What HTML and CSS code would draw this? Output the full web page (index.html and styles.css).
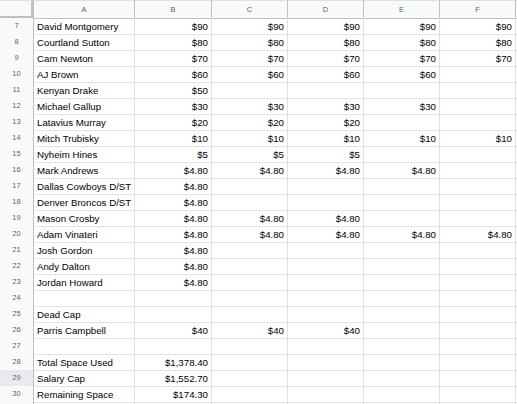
FILE: index.html
```html
<!DOCTYPE html>
<html>
<head>
<meta charset="utf-8">
<link rel="stylesheet" href="styles.css">
</head>
<body>
<div class="sheet">
  <div class="row head">
    <div class="corner"></div>
    <div class="ch">A</div><div class="ch">B</div><div class="ch">C</div><div class="ch">D</div><div class="ch">E</div><div class="ch">F</div><div class="ch"></div>
  </div>
  <div class="row"><div class="rh">7</div><div class="c">David Montgomery</div><div class="c n">$90</div><div class="c n">$90</div><div class="c n">$90</div><div class="c n">$90</div><div class="c n">$90</div><div class="c"></div></div>
  <div class="row"><div class="rh">8</div><div class="c">Courtland Sutton</div><div class="c n">$80</div><div class="c n">$80</div><div class="c n">$80</div><div class="c n">$80</div><div class="c n">$80</div><div class="c"></div></div>
  <div class="row"><div class="rh">9</div><div class="c">Cam Newton</div><div class="c n">$70</div><div class="c n">$70</div><div class="c n">$70</div><div class="c n">$70</div><div class="c n">$70</div><div class="c"></div></div>
  <div class="row"><div class="rh">10</div><div class="c">AJ Brown</div><div class="c n">$60</div><div class="c n">$60</div><div class="c n">$60</div><div class="c n">$60</div><div class="c"></div><div class="c"></div></div>
  <div class="row"><div class="rh">11</div><div class="c">Kenyan Drake</div><div class="c n">$50</div><div class="c"></div><div class="c"></div><div class="c"></div><div class="c"></div><div class="c"></div></div>
  <div class="row"><div class="rh">12</div><div class="c">Michael Gallup</div><div class="c n">$30</div><div class="c n">$30</div><div class="c n">$30</div><div class="c n">$30</div><div class="c"></div><div class="c"></div></div>
  <div class="row"><div class="rh">13</div><div class="c">Latavius Murray</div><div class="c n">$20</div><div class="c n">$20</div><div class="c n">$20</div><div class="c"></div><div class="c"></div><div class="c"></div></div>
  <div class="row"><div class="rh">14</div><div class="c">Mitch Trubisky</div><div class="c n">$10</div><div class="c n">$10</div><div class="c n">$10</div><div class="c n">$10</div><div class="c n">$10</div><div class="c"></div></div>
  <div class="row"><div class="rh">15</div><div class="c">Nyheim Hines</div><div class="c n">$5</div><div class="c n">$5</div><div class="c n">$5</div><div class="c"></div><div class="c"></div><div class="c"></div></div>
  <div class="row"><div class="rh">16</div><div class="c">Mark Andrews</div><div class="c n">$4.80</div><div class="c n">$4.80</div><div class="c n">$4.80</div><div class="c n">$4.80</div><div class="c"></div><div class="c"></div></div>
  <div class="row"><div class="rh">17</div><div class="c">Dallas Cowboys D/ST</div><div class="c n">$4.80</div><div class="c"></div><div class="c"></div><div class="c"></div><div class="c"></div><div class="c"></div></div>
  <div class="row"><div class="rh">18</div><div class="c">Denver Broncos D/ST</div><div class="c n">$4.80</div><div class="c"></div><div class="c"></div><div class="c"></div><div class="c"></div><div class="c"></div></div>
  <div class="row"><div class="rh">19</div><div class="c">Mason Crosby</div><div class="c n">$4.80</div><div class="c n">$4.80</div><div class="c n">$4.80</div><div class="c"></div><div class="c"></div><div class="c"></div></div>
  <div class="row"><div class="rh">20</div><div class="c">Adam Vinateri</div><div class="c n">$4.80</div><div class="c n">$4.80</div><div class="c n">$4.80</div><div class="c n">$4.80</div><div class="c n">$4.80</div><div class="c"></div></div>
  <div class="row"><div class="rh">21</div><div class="c">Josh Gordon</div><div class="c n">$4.80</div><div class="c"></div><div class="c"></div><div class="c"></div><div class="c"></div><div class="c"></div></div>
  <div class="row"><div class="rh">22</div><div class="c">Andy Dalton</div><div class="c n">$4.80</div><div class="c"></div><div class="c"></div><div class="c"></div><div class="c"></div><div class="c"></div></div>
  <div class="row"><div class="rh">23</div><div class="c">Jordan Howard</div><div class="c n">$4.80</div><div class="c"></div><div class="c"></div><div class="c"></div><div class="c"></div><div class="c"></div></div>
  <div class="row"><div class="rh">24</div><div class="c"></div><div class="c"></div><div class="c"></div><div class="c"></div><div class="c"></div><div class="c"></div><div class="c"></div></div>
  <div class="row"><div class="rh">25</div><div class="c">Dead Cap</div><div class="c"></div><div class="c"></div><div class="c"></div><div class="c"></div><div class="c"></div><div class="c"></div></div>
  <div class="row"><div class="rh">26</div><div class="c">Parris Campbell</div><div class="c n">$40</div><div class="c n">$40</div><div class="c n">$40</div><div class="c"></div><div class="c"></div><div class="c"></div></div>
  <div class="row"><div class="rh">27</div><div class="c"></div><div class="c"></div><div class="c"></div><div class="c"></div><div class="c"></div><div class="c"></div><div class="c"></div></div>
  <div class="row"><div class="rh">28</div><div class="c">Total Space Used</div><div class="c n">$1,378.40</div><div class="c"></div><div class="c"></div><div class="c"></div><div class="c"></div><div class="c"></div></div>
  <div class="row"><div class="rh sel">29</div><div class="c">Salary Cap</div><div class="c n">$1,552.70</div><div class="c"></div><div class="c"></div><div class="c"></div><div class="c"></div><div class="c"></div></div>
  <div class="row"><div class="rh">30</div><div class="c">Remaining Space</div><div class="c n">$174.30</div><div class="c"></div><div class="c"></div><div class="c"></div><div class="c"></div><div class="c"></div></div>
  <div class="row"><div class="rh"></div><div class="c"></div><div class="c"></div><div class="c"></div><div class="c"></div><div class="c"></div><div class="c"></div><div class="c"></div></div>
</div>
</body>
</html>
```
FILE: styles.css
```css
html, body {
  margin: 0;
  padding: 0;
  background: #fff;
  overflow: hidden;
}
.sheet {
  width: 600px;
  font-family: "Liberation Sans", Arial, sans-serif;
}
.row {
  display: grid;
  grid-template-columns: 34px 101px 77px 76px 76px 76px 76px 76px;
  height: 16px;
}
.row.head {
  height: 18px;
  background: #f8f9fa;
}
.corner {
  box-sizing: border-box;
  border-right: 3px solid #c0c0c0;
  border-bottom: 3px solid #c0c0c0;
  border-top: 1px solid #e0e0e0;
}
.ch {
  box-sizing: border-box;
  border-top: 1px solid #e0e0e0;
  border-right: 1px solid #c0c0c0;
  border-bottom: 1px solid #c0c0c0;
  color: #5f6368;
  font-size: 7.5px;
  text-align: center;
  line-height: 17px;
}
.rh {
  box-sizing: border-box;
  background: #f8f9fa;
  border-right: 1px solid #c0c0c0;
  border-bottom: 1px solid #e0e0e0;
  color: #5f6368;
  font-size: 7.5px;
  text-align: center;
  line-height: 16px;
}
.rh.sel {
  background: #e8eaed;
}
.c {
  box-sizing: border-box;
  border-right: 1px solid #e2e2e2;
  border-bottom: 1px solid #e2e2e2;
  font-size: 9.7px;
  line-height: 17px;
  padding: 0 3px;
  color: #000;
  white-space: nowrap;
  overflow: hidden;
}
.c.n {
  text-align: right;
}
```
